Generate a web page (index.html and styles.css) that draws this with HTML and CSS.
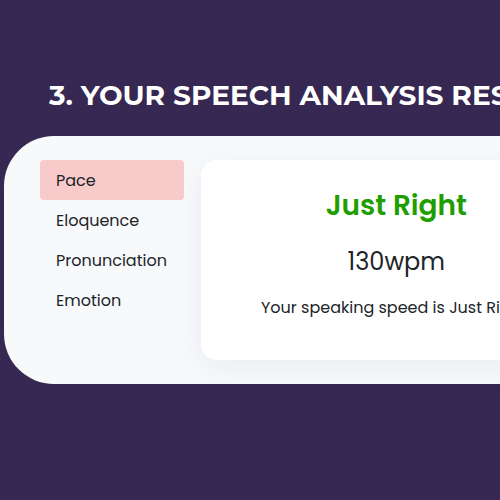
FILE: index.html
```html
<!DOCTYPE html>
<html lang="en">
<head>
<meta charset="utf-8">
<title>Speech analysis</title>
<link rel="stylesheet" href="styles.css">
</head>
<body>
<main class="results">
  <h1 class="results-title">3. YOUR SPEECH ANALYSIS RESULTS</h1>
  <section class="panel">
    <nav class="tabs">
      <button class="tab tab-active" type="button">Pace</button>
      <button class="tab" type="button">Eloquence</button>
      <button class="tab" type="button">Pronunciation</button>
      <button class="tab" type="button">Emotion</button>
    </nav>
    <article class="card">
      <h2 class="verdict">Just Right</h2>
      <p class="rate">130wpm</p>
      <p class="detail">Your speaking speed is Just Right!</p>
    </article>
  </section>
</main>
</body>
</html>
```
FILE: styles.css
```css
* {
  box-sizing: border-box;
}

body {
  margin: 0;
  min-height: 100vh;
  background: #362852;
  color: #212529;
  font-family: Poppins, "Open Sans", sans-serif;
  overflow: hidden;
}

.results {
  padding: 76px 0 0 4px;
}

.results-title {
  margin: 0 0 22px 45px;
  color: #fff;
  font-family: Montserrat, "Open Sans", sans-serif;
  font-size: 28px;
  font-weight: 700;
  line-height: 38px;
  white-space: nowrap;
}

.panel {
  display: flex;
  gap: 17px;
  min-width: max-content;
  padding: 24px 36px;
  border-radius: 50px;
  background: #f8f9fb;
}

.tabs {
  display: flex;
  flex-direction: column;
  flex: 0 0 144px;
}

.tab {
  padding: 2px 16px 0;
  border: 0;
  border-radius: 4px;
  background: none;
  color: inherit;
  font: 16px/38px Poppins, "Open Sans", sans-serif;
  text-align: left;
}

.tab-active {
  background: #f8caca;
}

.card {
  flex: 1;
  padding: 24px 60px;
  border-radius: 16px;
  background: #fff;
  box-shadow: 0 8px 32px rgba(33, 37, 60, 0.06);
  text-align: center;
}

.verdict {
  margin: 0 0 16px;
  color: #1e9e00;
  font-size: 28px;
  font-weight: 600;
  line-height: 44px;
}

.rate {
  margin: 0 0 16px;
  font-size: 24px;
  line-height: 36px;
}

.detail {
  margin: 0 0 16px;
  font-size: 16px;
  line-height: 24px;
}
```
